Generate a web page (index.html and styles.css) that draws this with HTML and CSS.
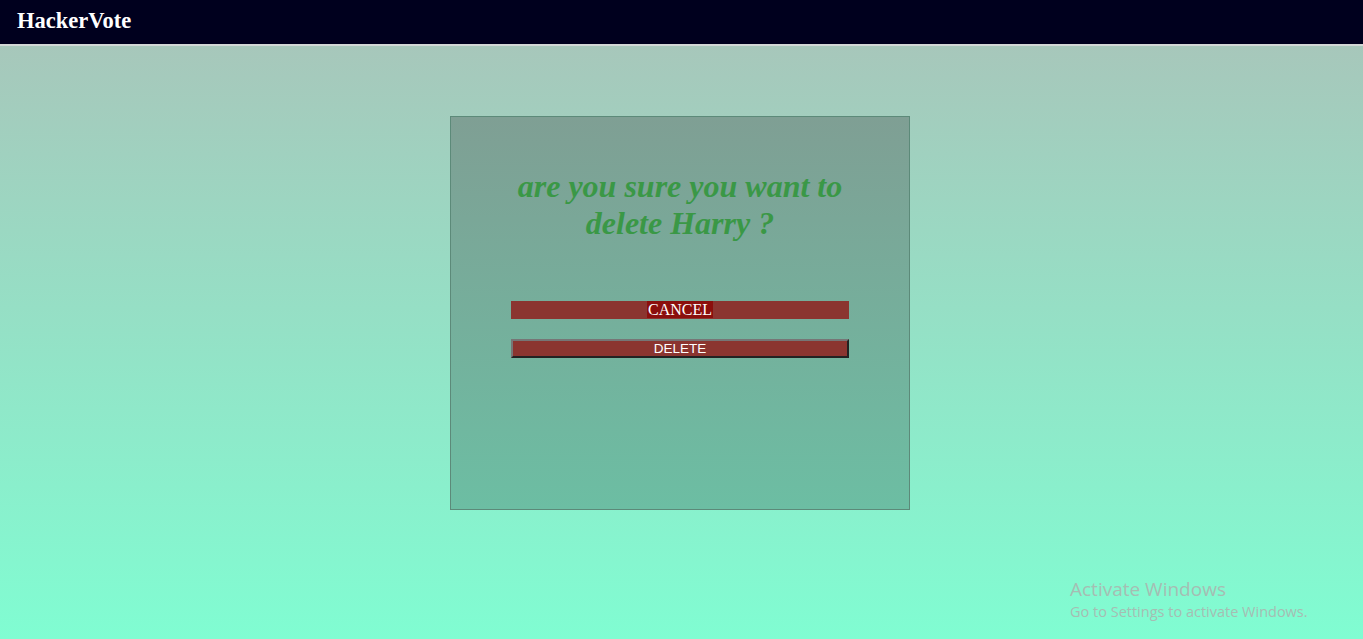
FILE: index.html
```html
<!DOCTYPE html>
<html>
<head>
<meta charset="utf-8">
<title>HackerVote</title>
<link rel="stylesheet" href="styles.css">
</head>
<body>
<header class="navbar">
  <span class="brand">HackerVote</span>
</header>
<main class="main">
  <section class="card">
    <h2 class="question">are you sure you want to delete Harry ?</h2>
    <div class="actions">
      <div class="cancel-bar"><a class="cancel-link" href="#">CANCEL</a></div>
      <button class="delete-btn" type="button">DELETE</button>
    </div>
  </section>
</main>
<div class="activate">
  <div class="activate-title">Activate Windows</div>
  <div class="activate-sub">Go to Settings to activate Windows.</div>
</div>
</body>
</html>
```
FILE: styles.css
```css
html, body {
  margin: 0;
  padding: 0;
  height: 100%;
}
body {
  font-family: "Liberation Serif", "Times New Roman", serif;
  background: linear-gradient(to bottom, #aac3b9 0%, #80fdd2 100%);
  min-height: 639px;
  overflow: hidden;
}
.navbar {
  height: 44px;
  background: #00001e;
  border-bottom: 2px solid #d3d8d6;
  box-sizing: content-box;
  display: flex;
  align-items: center;
  padding-left: 17px;
}
.brand {
  color: #ffffff;
  font-weight: bold;
  font-size: 22.5px;
  margin-top: -3px;
}
.main {
  display: flex;
  justify-content: center;
  padding-top: 70px;
  padding-right: 3px;
}
.card {
  width: 458px;
  height: 392px;
  border: 1px solid #5c8a79;
  background: linear-gradient(to bottom, #7f9f94 0%, #6cbea3 100%);
  display: flex;
  flex-direction: column;
  align-items: center;
}
.question {
  margin: 51px 0 0 0;
  width: 380px;
  text-align: center;
  font-style: italic;
  font-weight: bold;
  font-size: 32px;
  line-height: 37px;
  color: #3a9846;
}
.actions {
  margin-top: 59px;
  width: 338px;
  display: flex;
  flex-direction: column;
  gap: 20px;
}
.cancel-bar {
  height: 18px;
  background: #8b3530;
  text-align: center;
  line-height: 17px;
}
.cancel-link {
  color: #ffffff;
  text-decoration: none;
  font-size: 16px;
  background: #8b0f0c;
  padding: 0 1px;
  display: inline-block;
  height: 17px;
}
.delete-btn {
  height: 19px;
  width: 338px;
  padding: 0;
  background: #8b3530;
  color: #ffffff;
  font-family: "Liberation Sans", Arial, sans-serif;
  font-size: 13.5px;
  border-width: 2px;
  border-style: solid;
  border-color: #767676 #222222 #222222 #767676;
  line-height: 14px;
}
.activate {
  position: absolute;
  left: 1070px;
  top: 577px;
  color: #a6bdb3;
  font-family: "Open Sans", "Noto Sans", sans-serif;
}
.activate-title {
  font-size: 19px;
  line-height: 25px;
}
.activate-sub {
  font-size: 14.5px;
  line-height: 20px;
}
```
